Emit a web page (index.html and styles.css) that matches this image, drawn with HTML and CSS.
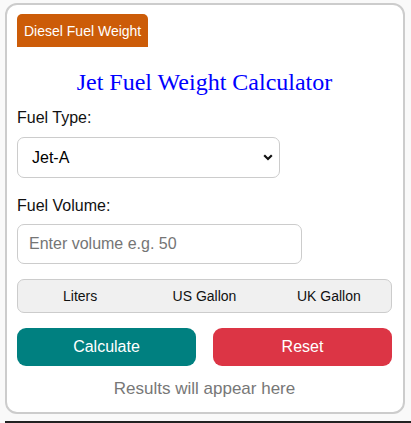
FILE: index.html
```html
<!DOCTYPE html>
<html>
<head>
<meta charset="utf-8">
<link rel="stylesheet" href="styles.css">
</head>
<body>
<div class="card">
  <div class="tabs"><span class="tab">Diesel Fuel Weight</span></div>
  <h2 class="title">Jet Fuel Weight Calculator</h2>
  <label class="label">Fuel Type:</label>
  <div class="select">
    <span>Jet-A</span>
    <svg class="chev" width="10" height="7" viewBox="0 0 10 7"><path d="M1.2 1.3 L5 5 L8.8 1.3" fill="none" stroke="#111" stroke-width="2.2"/></svg>
  </div>
  <label class="label label2">Fuel Volume:</label>
  <div class="input">Enter volume e.g. 50</div>
  <div class="units">
    <span>Liters</span><span>US Gallon</span><span>UK Gallon</span>
  </div>
  <div class="buttons">
    <div class="btn calc">Calculate</div>
    <div class="btn reset">Reset</div>
  </div>
  <div class="result">Results will appear here</div>
</div>
<div class="line"></div>
</body>
</html>
```
FILE: styles.css
```css
html, body { margin: 0; padding: 0; }
body {
  background: #f9f9f9;
  font-family: "Liberation Sans", Arial, sans-serif;
  padding: 3px 0 0 5px;
}
.card {
  box-sizing: border-box;
  width: 400px;
  height: 411px;
  background: #fff;
  border: 2px solid #ccc;
  border-radius: 12px;
  padding: 9px 11px 0 10px;
}
.tabs { display: flex; }
.tab {
  background: #cc5c08;
  color: #fff;
  font-size: 14px;
  height: 33px;
  line-height: 34px;
  padding: 0 7px;
  border-radius: 5px 5px 0 0;
}
.title {
  font-family: "Liberation Serif", "Times New Roman", serif;
  font-weight: normal;
  color: #0000ff;
  font-size: 24px;
  text-align: center;
  margin: 21px 0 0;
  line-height: 28px;
}
.label {
  display: block;
  font-size: 16px;
  color: #111;
  margin-top: 12px;
  line-height: 20px;
}
.label2 { margin-top: 18px; }
.select {
  box-sizing: border-box;
  width: 263px;
  height: 41px;
  margin-top: 9px;
  border: 1px solid #ccc;
  border-radius: 7px;
  display: flex;
  align-items: center;
  justify-content: space-between;
  padding: 0 6px 0 14px;
  font-size: 16px;
  color: #000;
}
.chev { display: block; }
.input {
  box-sizing: border-box;
  width: 285px;
  height: 40px;
  margin-top: 8px;
  border: 1px solid #ccc;
  border-radius: 7px;
  display: flex;
  align-items: center;
  padding: 0 11px;
  font-size: 16px;
  color: #757575;
}
.units {
  box-sizing: border-box;
  margin-top: 15px;
  height: 34px;
  background: #f0f0f0;
  border: 1px solid #ccc;
  border-radius: 7px;
  display: grid;
  grid-template-columns: 1fr 1fr 1fr;
  align-items: center;
  text-align: center;
  font-size: 14px;
  color: #111;
}
.buttons {
  display: grid;
  grid-template-columns: 1fr 1fr;
  gap: 17px;
  margin-top: 15px;
}
.btn {
  height: 38px;
  line-height: 38px;
  border-radius: 9px;
  color: #fff;
  font-size: 16px;
  text-align: center;
}
.calc { background: #008080; }
.reset { background: #dc3545; }
.result {
  text-align: center;
  color: #777;
  font-size: 17px;
  margin-top: 13px;
  line-height: 20px;
}
.line {
  height: 2px;
  background: #222;
  margin-top: 7px;
}
```
